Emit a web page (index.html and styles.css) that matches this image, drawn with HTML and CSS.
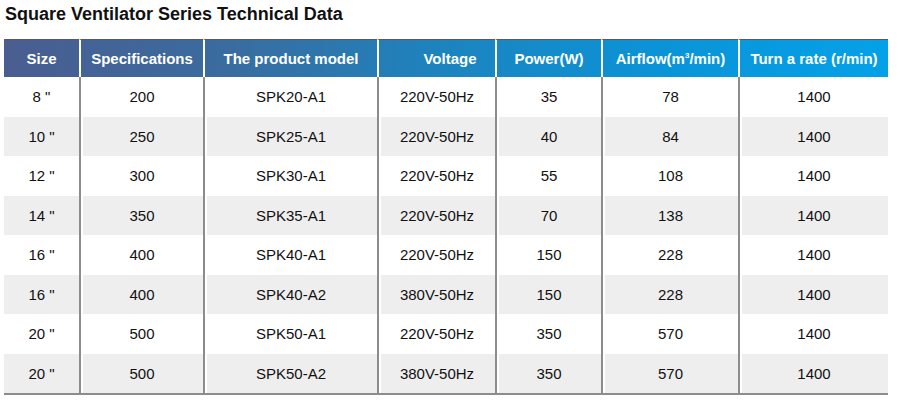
FILE: index.html
```html
<!DOCTYPE html>
<html>
<head>
<meta charset="utf-8">
<link rel="stylesheet" href="styles.css">
</head>
<body>
<h1 class="title">Square Ventilator Series Technical Data</h1>
<table class="spec">
  <colgroup>
    <col class="c1"><col class="c2"><col class="c3"><col class="c4"><col class="c5"><col class="c6"><col class="c7">
  </colgroup>
  <thead>
    <tr>
      <th>Size</th>
      <th>Specifications</th>
      <th>The product model</th>
      <th class="volt">Voltage</th>
      <th>Power(W)</th>
      <th>Airflow(m<sup>3</sup>/min)</th>
      <th>Turn a rate (r/min)</th>
    </tr>
  </thead>
  <tbody>
    <tr><td>8 "</td><td>200</td><td>SPK20-A1</td><td>220V-50Hz</td><td>35</td><td>78</td><td>1400</td></tr>
    <tr><td>10 "</td><td>250</td><td>SPK25-A1</td><td>220V-50Hz</td><td>40</td><td>84</td><td>1400</td></tr>
    <tr><td>12 "</td><td>300</td><td>SPK30-A1</td><td>220V-50Hz</td><td>55</td><td>108</td><td>1400</td></tr>
    <tr><td>14 "</td><td>350</td><td>SPK35-A1</td><td>220V-50Hz</td><td>70</td><td>138</td><td>1400</td></tr>
    <tr><td>16 "</td><td>400</td><td>SPK40-A1</td><td>220V-50Hz</td><td>150</td><td>228</td><td>1400</td></tr>
    <tr><td>16 "</td><td>400</td><td>SPK40-A2</td><td>380V-50Hz</td><td>150</td><td>228</td><td>1400</td></tr>
    <tr><td>20 "</td><td>500</td><td>SPK50-A1</td><td>220V-50Hz</td><td>350</td><td>570</td><td>1400</td></tr>
    <tr><td>20 "</td><td>500</td><td>SPK50-A2</td><td>380V-50Hz</td><td>350</td><td>570</td><td>1400</td></tr>
  </tbody>
</table>
</body>
</html>
```
FILE: styles.css
```css
html, body {
  margin: 0;
  padding: 0;
  background: #fff;
}
body {
  font-family: "Liberation Sans", Arial, sans-serif;
  color: #111;
}
.title {
  margin: 0;
  padding: 4px 0 0 5px;
  height: 39px;
  box-sizing: border-box;
  font-size: 18px;
  font-weight: bold;
  line-height: 20px;
  color: #111;
}
.spec {
  margin-left: 4px;
  width: 884px;
  table-layout: fixed;
  border-collapse: separate;
  border-spacing: 0;
  border-bottom: 2px solid #8c8c8c;
}
.c1 { width: 75px; }
.c2 { width: 124px; }
.c3 { width: 174px; }
.c4 { width: 118px; }
.c5 { width: 106px; }
.c6 { width: 137px; }
.c7 { width: 150px; }
thead tr {
  background: linear-gradient(to right, #4a5d90 0%, #3a6c9f 25%, #1c84bf 50%, #0a94d8 75%, #04a1e8 100%);
}
th {
  height: 38px;
  padding: 0 0 1px;
  border-top: 1px solid #5a5a5a;
  font-size: 15px;
  font-weight: bold;
  color: #fff;
  text-align: center;
  vertical-align: middle;
  box-sizing: border-box;
}
th + th {
  border-left: 2px solid #fff;
}
th.volt {
  padding-left: 26px;
}
th sup {
  font-size: 8px;
  line-height: 0;
  vertical-align: 6px;
}
td {
  height: 39.5px;
  padding: 0;
  font-size: 15px;
  text-align: center;
  vertical-align: middle;
  color: #111;
  box-sizing: border-box;
}
td + td {
  border-left: 2px solid #8c8c8c;
  box-shadow: inset 2px 0 0 #fff;
}
tbody tr:nth-child(even) td {
  background: #eeeeee;
}
```
